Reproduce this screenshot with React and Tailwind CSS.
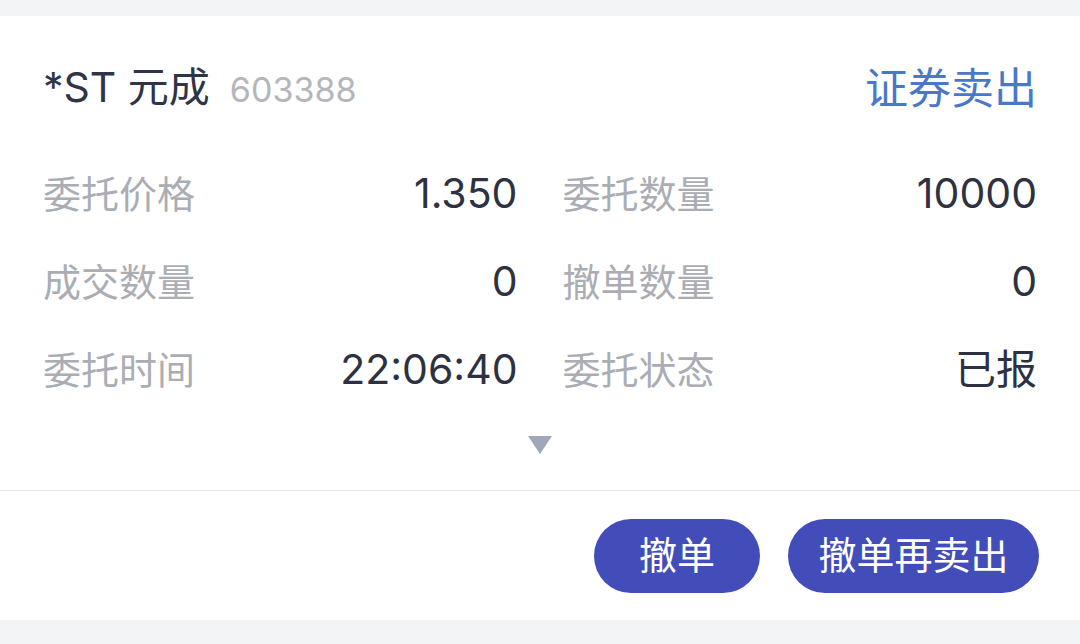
import React from "react";

const font = { fontFamily: 'Inter, "Noto Sans CJK SC", sans-serif' };

const rows = [
  ["委托价格", "1.350", "委托数量", "10000"],
  ["成交数量", "0", "撤单数量", "0"],
  ["委托时间", "22:06:40", "委托状态", "已报"],
];

// One label/value pair
const Field = ({ label, value }) => (
  <div className="flex items-center justify-between h-[88px]">
    <span className="text-[38px] text-[#abadb4]">{label}</span>
    <span className="text-[41px] text-[#2d3142]">{value}</span>
  </div>
);

export default function App() {
  return (
    <div className="w-[1080px] h-[644px] bg-[#f3f4f6] pt-[16px] overflow-hidden" style={font}>
      <div className="bg-white h-[604px] flex flex-col">
        {/* Header */}
        <div className="flex items-center justify-between px-[43px] h-[144px]">
          <div className="flex items-baseline gap-[20px]">
            <span className="text-[41px] text-[#2f3447]">*ST 元成</span>
            <span className="text-[34px] text-[#b4b6bc]">603388</span>
          </div>
          <span className="text-[43px] text-[#4a78c8]">证券卖出</span>
        </div>

        {/* Order details */}
        <div className="grid grid-cols-2 gap-x-[45px] px-[43px] -mt-[10px]">
          {rows.map(([l1, v1, l2, v2]) => (
            <React.Fragment key={l1}>
              <Field label={l1} value={v1} />
              <Field label={l2} value={v2} />
            </React.Fragment>
          ))}
        </div>

        {/* Expand arrow */}
        <div className="flex justify-center pt-[21px] h-[76px]">
          <svg width="28" height="20" viewBox="0 0 28 20">
            <path d="M2 1 H26 L14 19 Z" fill="#a0a8b8" />
          </svg>
        </div>

        <div className="h-px bg-[#e6e7ea]" />

        {/* Actions */}
        <div className="flex justify-end items-center gap-[28px] px-[41px] flex-1">
          <button className="h-[74px] w-[166px] rounded-full bg-[#434db9] text-white text-[38px]">
            撤单
          </button>
          <button className="h-[74px] w-[251px] rounded-full bg-[#434db9] text-white text-[38px]">
            撤单再卖出
          </button>
        </div>
      </div>
    </div>
  );
}
